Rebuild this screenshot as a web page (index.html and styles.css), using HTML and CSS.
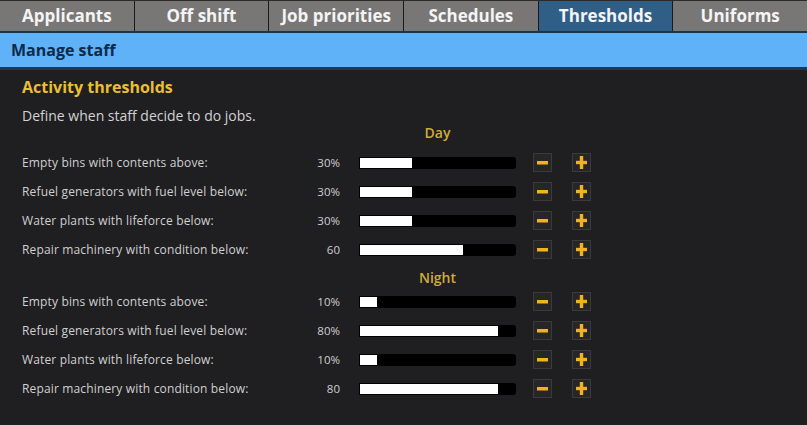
FILE: index.html
```html
<!DOCTYPE html>
<html>
<head>
<meta charset="utf-8">
<link rel="stylesheet" href="styles.css">
</head>
<body>
<div class="tabs">
  <div class="tab">Applicants</div>
  <div class="tab">Off shift</div>
  <div class="tab">Job priorities</div>
  <div class="tab">Schedules</div>
  <div class="tab active">Thresholds</div>
  <div class="tab">Uniforms</div>
</div>
<div class="header">Manage staff</div>
<div class="content">
  <div class="title">Activity thresholds</div>
  <div class="desc">Define when staff decide to do jobs.</div>

  <div class="period">Day</div>
  <div class="rows">
    <div class="row">
      <div class="label">Empty bins with contents above:</div>
      <div class="value">30%</div>
      <div class="bar"><div class="fill" style="width:52px"></div></div>
      <div class="btn"><svg width="11" height="11" viewBox="0 0 11 11"><rect x="0" y="4" width="11" height="3.5" fill="#f2b31c"/></svg></div>
      <div class="btn plus"><svg width="11" height="13" viewBox="0 0 11 13"><rect x="0" y="4.8" width="11" height="3.4" fill="#f2b31c"/><rect x="3.8" y="0" width="3.4" height="13" fill="#f2b31c"/></svg></div>
    </div>
    <div class="row">
      <div class="label">Refuel generators with fuel level below:</div>
      <div class="value">30%</div>
      <div class="bar"><div class="fill" style="width:52px"></div></div>
      <div class="btn"><svg width="11" height="11" viewBox="0 0 11 11"><rect x="0" y="4" width="11" height="3.5" fill="#f2b31c"/></svg></div>
      <div class="btn plus"><svg width="11" height="13" viewBox="0 0 11 13"><rect x="0" y="4.8" width="11" height="3.4" fill="#f2b31c"/><rect x="3.8" y="0" width="3.4" height="13" fill="#f2b31c"/></svg></div>
    </div>
    <div class="row">
      <div class="label">Water plants with lifeforce below:</div>
      <div class="value">30%</div>
      <div class="bar"><div class="fill" style="width:52px"></div></div>
      <div class="btn"><svg width="11" height="11" viewBox="0 0 11 11"><rect x="0" y="4" width="11" height="3.5" fill="#f2b31c"/></svg></div>
      <div class="btn plus"><svg width="11" height="13" viewBox="0 0 11 13"><rect x="0" y="4.8" width="11" height="3.4" fill="#f2b31c"/><rect x="3.8" y="0" width="3.4" height="13" fill="#f2b31c"/></svg></div>
    </div>
    <div class="row">
      <div class="label">Repair machinery with condition below:</div>
      <div class="value">60</div>
      <div class="bar"><div class="fill" style="width:103px"></div></div>
      <div class="btn"><svg width="11" height="11" viewBox="0 0 11 11"><rect x="0" y="4" width="11" height="3.5" fill="#f2b31c"/></svg></div>
      <div class="btn plus"><svg width="11" height="13" viewBox="0 0 11 13"><rect x="0" y="4.8" width="11" height="3.4" fill="#f2b31c"/><rect x="3.8" y="0" width="3.4" height="13" fill="#f2b31c"/></svg></div>
    </div>
  </div>

  <div class="period night">Night</div>
  <div class="rows">
    <div class="row">
      <div class="label">Empty bins with contents above:</div>
      <div class="value">10%</div>
      <div class="bar"><div class="fill" style="width:17px"></div></div>
      <div class="btn"><svg width="11" height="11" viewBox="0 0 11 11"><rect x="0" y="4" width="11" height="3.5" fill="#f2b31c"/></svg></div>
      <div class="btn plus"><svg width="11" height="13" viewBox="0 0 11 13"><rect x="0" y="4.8" width="11" height="3.4" fill="#f2b31c"/><rect x="3.8" y="0" width="3.4" height="13" fill="#f2b31c"/></svg></div>
    </div>
    <div class="row">
      <div class="label">Refuel generators with fuel level below:</div>
      <div class="value">80%</div>
      <div class="bar"><div class="fill" style="width:138px"></div></div>
      <div class="btn"><svg width="11" height="11" viewBox="0 0 11 11"><rect x="0" y="4" width="11" height="3.5" fill="#f2b31c"/></svg></div>
      <div class="btn plus"><svg width="11" height="13" viewBox="0 0 11 13"><rect x="0" y="4.8" width="11" height="3.4" fill="#f2b31c"/><rect x="3.8" y="0" width="3.4" height="13" fill="#f2b31c"/></svg></div>
    </div>
    <div class="row">
      <div class="label">Water plants with lifeforce below:</div>
      <div class="value">10%</div>
      <div class="bar"><div class="fill" style="width:17px"></div></div>
      <div class="btn"><svg width="11" height="11" viewBox="0 0 11 11"><rect x="0" y="4" width="11" height="3.5" fill="#f2b31c"/></svg></div>
      <div class="btn plus"><svg width="11" height="13" viewBox="0 0 11 13"><rect x="0" y="4.8" width="11" height="3.4" fill="#f2b31c"/><rect x="3.8" y="0" width="3.4" height="13" fill="#f2b31c"/></svg></div>
    </div>
    <div class="row">
      <div class="label">Repair machinery with condition below:</div>
      <div class="value">80</div>
      <div class="bar"><div class="fill" style="width:138px"></div></div>
      <div class="btn"><svg width="11" height="11" viewBox="0 0 11 11"><rect x="0" y="4" width="11" height="3.5" fill="#f2b31c"/></svg></div>
      <div class="btn plus"><svg width="11" height="13" viewBox="0 0 11 13"><rect x="0" y="4.8" width="11" height="3.4" fill="#f2b31c"/><rect x="3.8" y="0" width="3.4" height="13" fill="#f2b31c"/></svg></div>
    </div>
  </div>
</div>
</body>
</html>
```
FILE: styles.css
```css
html, body {
  margin: 0;
  padding: 0;
  background: #1f1e21;
  font-family: "Open Sans", "Noto Sans", sans-serif;
  width: 807px;
  height: 425px;
  overflow: hidden;
}

.tabs {
  display: flex;
  height: 30px;
  border-top: 1px solid #2a2a2a;
  background: #1a1a1a;
  gap: 1px;
}

.tab {
  flex: 1;
  background: #787776;
  color: #f4f4f4;
  font-weight: 700;
  font-size: 17px;
  line-height: 30px;
  text-align: center;
}

.tab.active {
  background: #2f5e86;
}

.header {
  border-top: 2px solid #1a3550;
  border-bottom: 3px solid #193a5c;
  background: #5fb2f8;
  height: 34px;
  line-height: 34px;
  padding-left: 11px;
  color: #0d2a48;
  font-weight: 700;
  font-size: 16px;
}

.content {
  padding-left: 22px;
}

.title {
  margin-top: 7px;
  line-height: 20px;
  color: #e9bf33;
  font-weight: 700;
  font-size: 16px;
}

.desc {
  margin-top: 10px;
  line-height: 18px;
  color: #d2d2d2;
  font-size: 14px;
}

.period {
  width: 157px;
  margin-left: 337px;
  line-height: 16px;
  text-align: center;
  color: #cfac38;
  font-size: 14px;
  font-weight: 600;
}

.period.night {
  margin-top: 6px;
}

.rows {
  margin-top: 7px;
}

.period.night + .rows {
  margin-top: 1px;
}

.row {
  display: flex;
  align-items: center;
  height: 29px;
}

.label {
  width: 290px;
  font-size: 12px;
  letter-spacing: 0.15px;
  color: #d0d0d0;
}

.value {
  width: 28px;
  text-align: right;
  font-size: 11.5px;
  color: #cfcfcf;
}

.bar {
  margin-left: 19px;
  width: 157px;
  height: 12px;
  background: #000;
  border-radius: 0 3px 3px 0;
  box-sizing: border-box;
  padding: 1px 0 1px 1px;
}

.fill {
  height: 10px;
  background: #fff;
}

.btn {
  margin-left: 17px;
  width: 19px;
  height: 19px;
  box-sizing: border-box;
  background: #262626;
  border: 1px solid #3a3a3a;
  display: flex;
  align-items: center;
  justify-content: center;
}

.btn.plus {
  margin-left: 20px;
}
```
